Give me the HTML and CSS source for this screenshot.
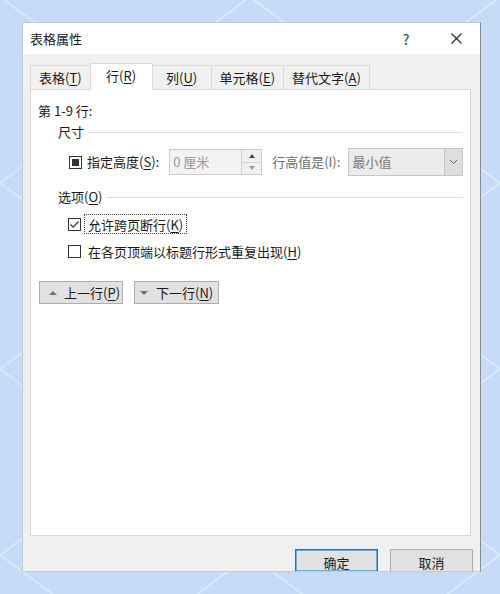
FILE: index.html
```html
<!DOCTYPE html>
<html lang="zh-CN">
<head>
    <meta charset="UTF-8">
    <title>表格属性</title>
    <link rel="stylesheet" href="styles.css">
</head>
<body>
    <svg class="backdrop" width="500" height="594">
        <defs>
            <pattern id="lattice" x="0" y="-3" width="250" height="186" patternUnits="userSpaceOnUse">
                <line x1="0" y1="0" x2="250" y2="186" />
                <line x1="0" y1="186" x2="250" y2="0" />
            </pattern>
        </defs>
        <rect width="500" height="594" fill="url(#lattice)" />
    </svg>

    <div class="dialog">
        <div class="titlebar">
            <span class="title">表格属性</span>
            <span class="title-btn help">?</span>
            <span class="title-btn close">
                <svg width="11" height="11" viewBox="0 0 11 11"><path d="M0.5 0.5 L10.5 10.5 M10.5 0.5 L0.5 10.5" /></svg>
            </span>
        </div>

        <div class="dialog-body">
            <div class="tabs">
                <div class="tab">表格(<u>T</u>)</div>
                <div class="tab active">行(<u>R</u>)</div>
                <div class="tab">列(<u>U</u>)</div>
                <div class="tab">单元格(<u>E</u>)</div>
                <div class="tab">替代文字(<u>A</u>)</div>
            </div>

            <div class="panel">
                <div class="rows-label">第 1-9 行:</div>

                <div class="group-head">尺寸</div>
                <div class="size-row">
                    <span class="checkbox mixed"></span>
                    <span class="label">指定高度(<u>S</u>):</span>
                    <div class="spin">
                        <span class="spin-value">0 厘米</span>
                        <div class="spin-btns">
                            <span class="spin-up"></span>
                            <span class="spin-down"></span>
                        </div>
                    </div>
                    <span class="label dim">行高值是(I):</span>
                    <div class="select">
                        <span class="select-value">最小值</span>
                        <span class="select-drop">
                            <svg width="9" height="6" viewBox="0 0 9 6"><path d="M1 1 L4.5 4.5 L8 1" /></svg>
                        </span>
                    </div>
                </div>

                <div class="group-head options">选项(<u>O</u>)</div>
                <div class="check-row">
                    <span class="checkbox">
                        <svg width="11" height="11" viewBox="0 0 11 11"><path d="M1.5 5.5 L4.2 8.2 L9.5 2.5" /></svg>
                    </span>
                    <span class="check-label focused">允许跨页断行(<u>K</u>)</span>
                </div>
                <div class="check-row">
                    <span class="checkbox"></span>
                    <span class="check-label">在各页顶端以标题行形式重复出现(<u>H</u>)</span>
                </div>

                <div class="nav-row">
                    <button class="btn nav-btn"><span class="tri up"></span>上一行(<u>P</u>)</button>
                    <button class="btn nav-btn"><span class="tri down"></span>下一行(<u>N</u>)</button>
                </div>
            </div>

            <div class="actions">
                <button class="btn action default">确定</button>
                <button class="btn action">取消</button>
            </div>
        </div>
    </div>
</body>
</html>
```

FILE: styles.css
```css
body {
    margin: 0;
    padding: 22px 0 0 22px;
    width: 500px;
    height: 594px;
    box-sizing: border-box;
    overflow: hidden;
    background-color: #c5dbf7;
    font-family: "Noto Sans CJK SC", "Noto Sans", sans-serif;
    font-size: 13px;
    line-height: 18px;
    color: #1a1a1a;
    position: relative;
}
u {
    text-decoration-thickness: 1px;
    text-underline-offset: 2px;
}
.backdrop {
    position: absolute;
    left: 0;
    top: 0;
}
.backdrop line {
    stroke: #e2edfb;
    stroke-width: 1.4;
}
.dialog {
    position: relative;
    width: 459px;
    height: 550px;
    box-sizing: border-box;
    border: 1px solid #c9c9c9;
    border-right-color: #8c8c8c;
    background-color: #f0f0f0;
    overflow: hidden;
}

/* title bar */
.titlebar {
    height: 31px;
    background-color: #ffffff;
    display: flex;
    align-items: center;
    padding-left: 7px;
}
.title {
    flex: 1;
}
.title-btn {
    width: 48px;
    height: 31px;
    display: flex;
    align-items: center;
    justify-content: center;
    color: #333;
    font-size: 14px;
}
.help {
    margin-right: 2px;
}
.close svg path {
    stroke: #222;
    stroke-width: 1.1;
    fill: none;
}

/* tabs */
.tabs {
    display: flex;
    align-items: flex-end;
    height: 26px;
    margin-top: 9px;
    padding-left: 7px;
}
.tab {
    height: 24px;
    min-width: 60px;
    padding: 1px 8px 0 8px;
    box-sizing: border-box;
    border: 1px solid #d9d9d9;
    border-bottom: none;
    margin-right: -1px;
    background-color: #f0f0f0;
    display: flex;
    align-items: center;
    justify-content: center;
    white-space: nowrap;
}
.tab.active {
    height: 27px;
    min-width: 63px;
    margin-bottom: -1px;
    background-color: #ffffff;
    position: relative;
    z-index: 1;
    padding-top: 0;
    padding-bottom: 2px;
}

/* panel */
.panel {
    height: 447px;
    margin: 0 9px 0 7px;
    box-sizing: border-box;
    border: 1px solid #d9d9d9;
    background-color: #ffffff;
    padding: 12px 7px 0 7px;
}
.group-head {
    display: flex;
    align-items: center;
    margin-top: 3px;
    margin-left: 20px;
}
.group-head::after {
    content: "";
    flex: 1;
    height: 1px;
    margin-left: 4px;
    background-color: #dcdcdc;
}
.group-head.options {
    margin-top: 12px;
}
.size-row {
    display: flex;
    align-items: center;
    height: 28px;
    margin-top: 7px;
    margin-left: 31px;
}
.checkbox {
    width: 13px;
    height: 13px;
    box-sizing: border-box;
    border: 1px solid #333;
    background-color: #fff;
    display: flex;
    align-items: center;
    justify-content: center;
    flex-shrink: 0;
}
.checkbox.mixed::after {
    content: "";
    width: 7px;
    height: 7px;
    background-color: #333;
}
.checkbox svg path {
    stroke: #333;
    stroke-width: 1.2;
    fill: none;
}
.label {
    margin-left: 5px;
    margin-right: 10px;
    white-space: nowrap;
    flex-shrink: 0;
}
.label.dim {
    color: #6d6d6d;
    margin-left: 0;
    margin-right: 8px;
}
.spin {
    width: 93px;
    height: 26px;
    flex-shrink: 0;
    box-sizing: border-box;
    border: 1px solid #cccccc;
    background-color: #f3f3f3;
    display: flex;
    align-items: center;
    margin-right: 10px;
}
.spin-value {
    flex: 1;
    padding-left: 3px;
    color: #9a9a9a;
}
.spin-btns {
    width: 19px;
    height: 24px;
    display: flex;
    flex-direction: column;
    border-left: 1px solid #d4d4d4;
}
.spin-btns span {
    flex: 1;
    display: flex;
    align-items: center;
    justify-content: center;
    background-color: #f0f0f0;
}
.spin-up {
    border-bottom: 1px solid #d4d4d4;
}
.spin-up::after {
    content: "";
    border: 3px solid transparent;
    border-top: none;
    border-bottom: 4px solid #444;
}
.spin-down::after {
    content: "";
    border: 3px solid transparent;
    border-bottom: none;
    border-top: 4px solid #9a9a9a;
}
.select {
    flex: 1;
    min-width: 0;
    height: 28px;
    box-sizing: border-box;
    border: 1px solid #c6c6c6;
    background-color: #ececec;
    display: flex;
    align-items: center;
}
.select-value {
    flex: 1;
    padding-left: 3px;
    color: #7a7a7a;
}
.select-drop {
    width: 17px;
    height: 26px;
    border-left: 1px solid #c6c6c6;
    background-color: #dedede;
    display: flex;
    align-items: center;
    justify-content: center;
}
.select-drop svg path {
    stroke: #666;
    stroke-width: 1;
    fill: none;
}
.check-row {
    display: flex;
    align-items: center;
    height: 20px;
    margin-top: 8px;
    margin-left: 30px;
}
.check-row + .check-row {
    margin-top: 7px;
}
.check-label {
    margin-left: 3px;
    padding: 0 3px;
    height: 20px;
    line-height: 19px;
    border: 1px solid transparent;
    box-sizing: border-box;
    white-space: nowrap;
}
.check-label.focused {
    border: 1px dotted #444;
}

/* buttons */
.btn {
    font-family: inherit;
    font-size: 13px;
    color: #1a1a1a;
    background-color: #e1e1e1;
    border: 1px solid #adadad;
    border-radius: 0;
    padding: 0;
    margin: 0;
    white-space: nowrap;
}
.nav-row {
    display: flex;
    gap: 11px;
    margin-top: 20px;
    margin-left: 1px;
}
.nav-btn {
    height: 23px;
    width: 84px;
    display: flex;
    align-items: center;
    padding-left: 9px;
}
.nav-btn + .nav-btn {
    width: 85px;
    padding-left: 5px;
}
.tri {
    width: 0;
    height: 0;
    border: 4px solid transparent;
    margin-right: 7px;
}
.tri.up {
    border-top: none;
    border-bottom: 4px solid #707070;
}
.tri.down {
    border-bottom: none;
    border-top: 4px solid #707070;
    margin-right: 8px;
}
.actions {
    display: flex;
    justify-content: flex-end;
    gap: 12px;
    margin-top: 13px;
    padding-right: 7px;
}
.action {
    width: 83px;
    height: 23px;
    padding-top: 4px;
    line-height: 17px;
}
.action.default {
    border-color: #0078d7;
    box-shadow: inset 0 0 0 0.5px #0078d7;
}
```
